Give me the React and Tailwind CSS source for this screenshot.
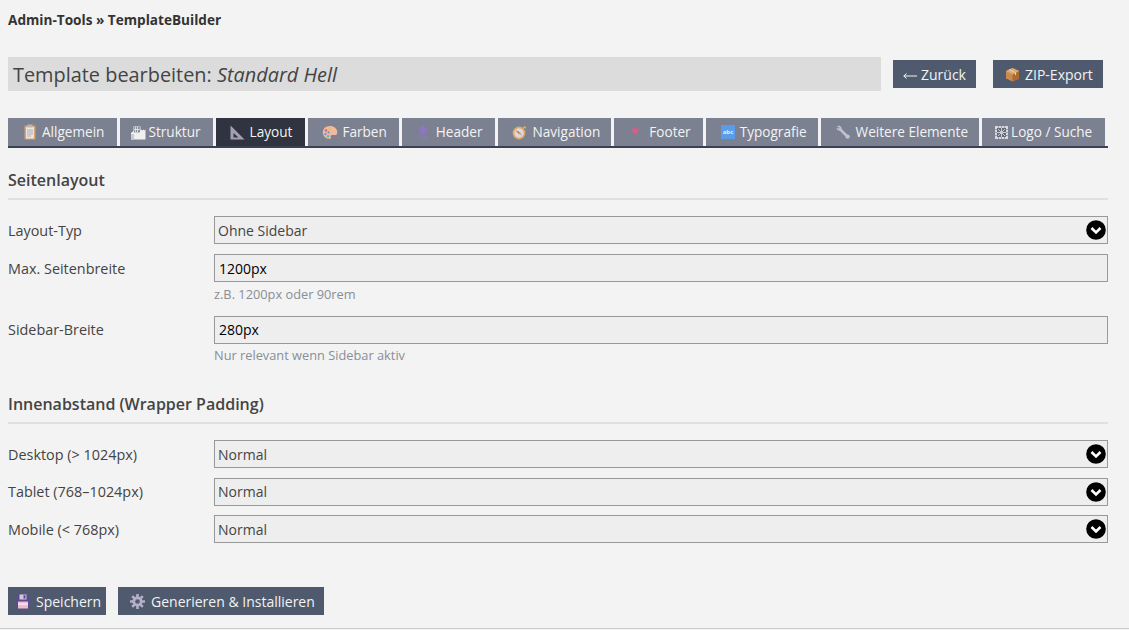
import React from "react";

const S = ({ children, w = 16, h = 16, vb = "0 0 16 16" }) => (
  <svg width={w} height={h} viewBox={vb} className="shrink-0" aria-hidden="true">{children}</svg>
);

const Clipboard = () => (
  <S w={12} h={16} vb="0 0 12 16">
    <rect x="0.5" y="1.5" width="11" height="14" rx="1" fill="#d9a06c" />
    <rect x="2" y="3" width="8" height="11.5" fill="#e8e6e3" />
    <rect x="3.5" y="0.5" width="5" height="3" fill="#b9b6b3" />
    <path d="M3 6h6M3 8h6M3 10h6M3 12h4" stroke="#a9a8aa" strokeWidth="0.9" />
  </S>
);
const Struktur = () => (
  <S w={15} h={15} vb="0 0 15 15">
    <path d="M0 8L2.500 6V1.500h7V5.500l1-1 1 1 1-1 1 1 1-1V14.500H0z" fill="#f0f0f2" />
    <rect x="3" y="2" width="6" height="5.500" fill="#8d929c" />
    <path d="M4.500 2v5.500M6.500 2v5.500M3 4.500h6" stroke="#e7e8ea" strokeWidth="0.8" />
    <path d="M0 9h3v5.500H0z" fill="#c9cbd0" />
  </S>
);
const Triangle = () => (
  <S w={15} h={15} vb="0 0 15 15">
    <path d="M0.500 0.500L14.500 14.500H0.500z" fill="#a49fb3" />
    <path d="M3.500 8L8.500 12.500H3.500z" fill="#2f3440" />
  </S>
);
const Palette = () => (
  <S w={16} h={15} vb="0 0 16 15">
    <path d="M8 1C3.800 1 .8 3.800.8 7.400c0 3.600 3 6.400 6.800 6.400 1.600 0 1.600-1 1.200-1.800-.5-1 0-2 1.300-2h2.600c1.600 0 2.600-1 2.600-2.600C15.300 3.600 12 1 8 1z" fill="#f1b9a0" />
    <circle cx="4" cy="5.500" r="1.300" fill="#d8609f" />
    <circle cx="7.500" cy="3.600" r="1.300" fill="#e1c25d" />
    <circle cx="3.400" cy="9" r="1.300" fill="#59a6e0" />
    <circle cx="6" cy="11.200" r="1.200" fill="#55b8ab" />
    <circle cx="6.600" cy="7.400" r="1.100" fill="#5c9bdc" />
  </S>
);
const Top = () => (
  <S w={12} h={15} vb="0 0 12 15">
    <path d="M6 0L11.500 5.500H8.500V9.500H3.500V5.500H.5z" fill="#8e76c2" />
    <path d="M.3 10.800h3.200v1H2.400v3.200H1.400v-3.200H.3zM4.200 10.800h3v4.200h-3zM5.100 11.800v2.200h1.200v-2.200zM8 10.800h3.700v2.800H9V15H8zM9 11.800v.8h1.700v-.8z" fill="#8e76c2" fillRule="evenodd" opacity="0.8" />
  </S>
);
const Compass = () => (
  <S w={15} h={15} vb="0 0 15 15">
    <circle cx="7" cy="8" r="6.400" fill="#dcaa62" />
    <circle cx="7" cy="8" r="4.700" fill="#ded8d6" />
    <path d="M3.800 5.200L8 7.300 10.200 10.800 6 8.600z" fill="#b5a0ad" />
    <path d="M3.800 5.200L7.400 7.200 6.400 8.400z" fill="#d9607f" />
    <path d="M11 3.500L13 1.500M12 1.200l2 2" stroke="#dcaa62" strokeWidth="1.300" />
  </S>
);
const Down = () => (
  <S w={12} h={10} vb="0 0 12 10">
    <path d="M2 1.500H10.500L6.200 8.500z" fill="#dc5c83" />
  </S>
);
const Abc = () => (
  <S w={14} h={14} vb="0 0 14 14">
    <rect width="14" height="14" rx="1.200" fill="#5a9bea" />
    <text x="7" y="9.400" textAnchor="middle" fontSize="6" fontWeight="700" fill="#e8eefb" fontFamily="'Open Sans', sans-serif">abc</text>
  </S>
);
const Wrench = () => (
  <S w={14} h={14} vb="0 0 14 14">
    <path d="M4 4.200L11.300 11.500" stroke="#c2c1cc" strokeWidth="2.600" />
    <path d="M.8 1.500C2.200.2 4.800.5 5.400 2.400 5.800 3.600 5.400 4.800 4.800 5.400 3.600 6 1.800 5.600 1 4.500.6 3.700.5 3 .6 2.400L2.600 3.800 3.600 2.800z" fill="#c2c1cc" />
    <circle cx="11.600" cy="11.600" r="2.200" fill="#c2c1cc" />
  </S>
);
const Frame = () => (
  <S w={13} h={13} vb="0 0 13 13">
    <rect x="0" y="0" width="13" height="13" fill="#d9dae0" />
    <rect x="2" y="2" width="9" height="9" fill="#666b79" />
    <path d="M6.500 2v9M2 6.500h9M3 3l7 7M10 3l-7 7" stroke="#c9cad2" strokeWidth="1" />
    <path d="M3.500 0v2M6.500 0v2M9.500 0v2M3.500 11v2M6.500 11v2M9.500 11v2M0 3.500h2M0 6.500h2M0 9.500h2M11 3.500h2M11 6.500h2M11 9.500h2" stroke="#80859a" strokeWidth="0.7" />
  </S>
);
const Box = () => (
  <S w={15} h={15} vb="0 0 15 15">
    <path d="M7.500 1L14 4v7.500L7.500 14.600 1 11.500V4z" fill="#c98b4e" />
    <path d="M7.500 7.400L14 4v7.500L7.500 14.600z" fill="#a96c35" />
    <path d="M1 4l6.500 3.400L14 4 7.500 1z" fill="#dda86f" />
    <path d="M4 2.500l6.500 3.200v2.400" stroke="#ecd5b3" strokeWidth="1" fill="none" />
  </S>
);
const Floppy = () => (
  <S w={14} h={15} vb="0 0 14 15">
    <path d="M.5 1.500A1 1 0 011.500.5H12l1.500 1.500v11.500a1 1 0 01-1 1h-11a1 1 0 01-1-1z" fill="#5d4a8e" />
    <rect x="3.500" y="0.5" width="7" height="5" fill="#cfc9de" />
    <rect x="7.500" y="1.200" width="2" height="3.400" fill="#5d4a8e" />
    <rect x="2" y="7.500" width="10" height="7" fill="#eeb9d2" />
    <rect x="2" y="9.200" width="10" height="1.800" fill="#f6dfe9" />
  </S>
);
const Gear = () => (
  <S w={15} h={15} vb="0 0 15 15">
    <g fill="#b7aecb">
      <circle cx="7.500" cy="7.500" r="5" />
      <path d="M6.200 0h2.600v15H6.200zM0 6.200h15v2.600H0z" />
      <path d="M6.200 0h2.600v15H6.200zM0 6.200h15v2.600H0z" transform="rotate(45 7.500 7.500)" />
    </g>
    <circle cx="7.500" cy="7.500" r="2.300" fill="#4f5a6e" />
  </S>
);
const ArrowLeft = () => (
  <svg width="14" height="8" viewBox="0 0 14 8" className="shrink-0 mt-[3px]" aria-hidden="true">
    <path d="M.8 4H14" stroke="#f3f3f3" strokeWidth="1" />
    <path d="M3.600 1.500L.8 4l2.800 2.500" fill="none" stroke="#f3f3f3" strokeWidth="1" />
  </svg>
);

const tabs = [
  { label: "Allgemein", icon: <Clipboard />, cls: "pl-4 pr-[13px] gap-[6px]" },
  { label: "Struktur", icon: <Struktur />, cls: "pl-[11px] pr-3 gap-[2px]" },
  { label: "Layout", icon: <Triangle />, cls: "pl-[14px] pr-[13px] gap-[5px]", active: true },
  { label: "Farben", icon: <Palette />, cls: "pl-[14px] pr-3 gap-1" },
  { label: "Header", icon: <Top />, cls: "pl-[15px] pr-3 gap-[7px]" },
  { label: "Navigation", icon: <Compass />, cls: "pl-[14px] pr-[11px] gap-[6px]" },
  { label: "Footer", icon: <Down />, cls: "pl-[15px] pr-3 gap-2" },
  { label: "Typografie", icon: <Abc />, cls: "pl-[15px] pr-[11px] gap-[5px]" },
  { label: "Weitere Elemente", icon: <Wrench />, cls: "pl-[15px] pr-[11px] gap-[6px]" },
  { label: "Logo / Suche", icon: <Frame />, cls: "pl-[13px] pr-[13px] gap-[3px]" },
];

const Chevron = () => (
  <svg width="20" height="20" viewBox="0 0 20 20" className="absolute right-[1px] top-[3px]" aria-hidden="true">
    <circle cx="10" cy="10" r="9.800" fill="#000" />
    <path d="M5.500 8L10 12.500 14.500 8" fill="none" stroke="#fff" strokeWidth="2.600" />
  </svg>
);

const Select = ({ value, cls = "" }) => (
  <div className={`relative h-7 flex-1 flex items-center border border-[#999] bg-[#eeeeee] pl-[3px] text-[14px] text-[#444] ${cls}`}>
    {value}
    <Chevron />
  </div>
);

const Input = ({ value, cls = "" }) => (
  <div className={`h-7 flex items-center border border-[#999] bg-[#eeeeee] pl-1 text-[14px] text-black ${cls}`}>{value}</div>
);

const Row = ({ label, children, cls = "", labelCls = "pt-[1px]" }) => (
  <div className={`flex ${cls}`}>
    <div className={`w-[206px] shrink-0 h-7 flex items-center text-[14.4px] text-[#444] ${labelCls}`}>{label}</div>
    <div className="flex-1 flex flex-col">{children}</div>
  </div>
);

const Hint = ({ children, cls = "mt-1" }) => <div className={`h-[17px] leading-[17px] text-[12.8px] text-[#888e96] ${cls}`}>{children}</div>;

const Heading = ({ children, cls = "" }) => (
  <div className={`h-8 border-b-2 border-[#e0e0e0] text-[16px] font-semibold text-[#444] ${cls}`}>{children}</div>
);

const Btn = ({ children, cls = "" }) => (
  <div className={`h-7 flex items-center bg-[#4f5a6e] text-[14px] text-[#f3f3f3] ${cls}`}>{children}</div>
);

export default function App() {
  return (
    <div className="h-[630px] w-[1129px] overflow-hidden bg-[#f3f3f3] font-['Open_Sans',sans-serif]">
      <div className="h-[629px] border-b border-[#cccccc] pl-2 pr-[21px] pt-[11px]">
        <div className="h-[18px] leading-[18px] text-[13.6px] font-bold text-[#333]">Admin-Tools » TemplateBuilder</div>

        <div className="mt-[28px] flex items-center">
          <div className="h-[34px] w-[873px] bg-[#dcdcdc] pl-[5px] text-[19.9px] leading-[35px] text-[#444]">
            Template bearbeiten: <em>Standard Hell</em>
          </div>
          <Btn cls="ml-3 w-[83px] pl-[10px] gap-1"><ArrowLeft />Zurück</Btn>
          <Btn cls="ml-[17px] w-[110px] pl-[12px] gap-[5px]"><Box />ZIP-Export</Btn>
        </div>

        <div className="mt-[27px] flex gap-[3px] border-b-2 border-[#3a4150] h-[30px]">
          {tabs.map((t) => (
            <div
              key={t.label}
              className={`h-7 flex items-center whitespace-nowrap text-[13.6px] text-[#f3f3f3] ${t.cls} ${t.active ? "bg-[#2f3440]" : "bg-[#7b8190]"}`}
            >
              {t.icon}
              <span>{t.label}</span>
            </div>
          ))}
        </div>

        <Heading cls="mt-5">Seitenlayout</Heading>

        <Row label="Layout-Typ" cls="mt-4"><Select value="Ohne Sidebar" /></Row>
        <Row label="Max. Seitenbreite" cls="mt-[10px]">
          <Input value="1200px" />
          <Hint>z.B. 1200px oder 90rem</Hint>
        </Row>
        <Row label="Sidebar-Breite" cls="mt-[13px]" labelCls="pb-[1px]">
          <Input value="280px" cls="pb-[2px]" />
          <Hint cls="mt-[3px]">Nur relevant wenn Sidebar aktiv</Hint>
        </Row>

        <Heading cls="mt-[28px]">Innenabstand (Wrapper Padding)</Heading>

        <Row label="Desktop (> 1024px)" cls="mt-4"><Select value="Normal" /></Row>
        <Row label="Tablet (768–1024px)" cls="mt-[10px]" labelCls="pb-[1px]"><Select value="Normal" cls="pb-[2px]" /></Row>
        <Row label="Mobile (< 768px)" cls="mt-[9px]"><Select value="Normal" /></Row>

        <div className="mt-[44px] flex gap-3">
          <Btn cls="w-[98px] pl-2 gap-[6px]"><Floppy />Speichern</Btn>
          <Btn cls="w-[206px] pl-[12px] gap-[6px]"><Gear />Generieren &amp; Installieren</Btn>
        </div>
      </div>
    </div>
  );
}
